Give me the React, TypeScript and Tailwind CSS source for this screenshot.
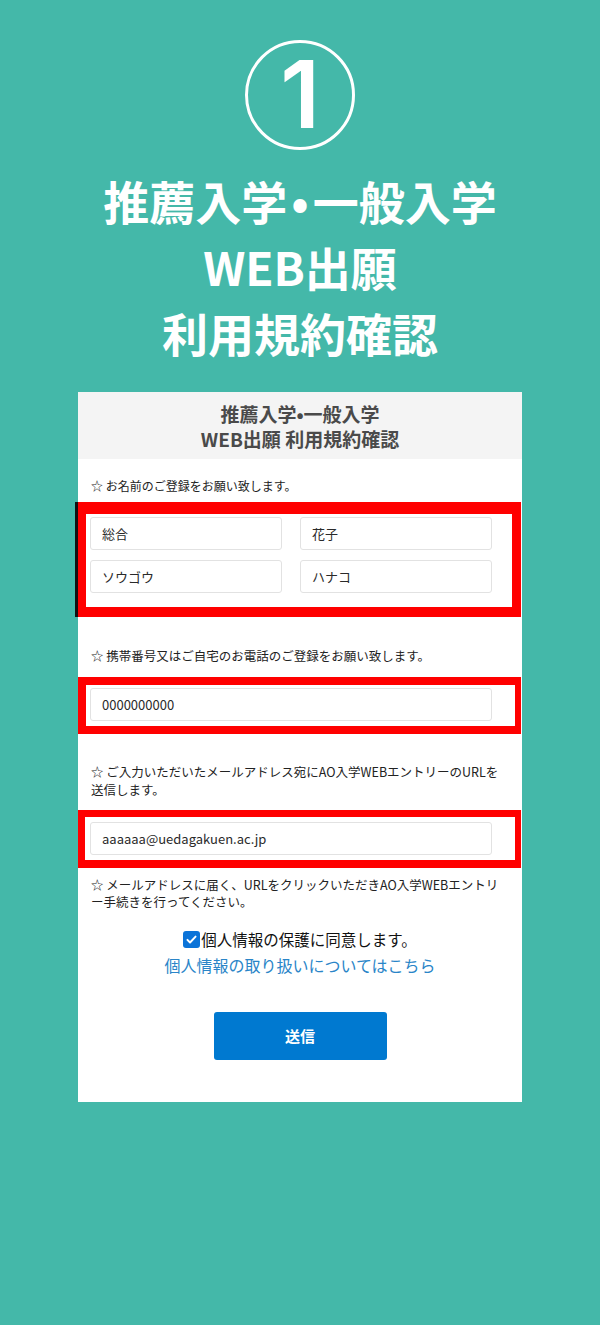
import React from "react";

const jp = { fontFamily: '"Noto Sans CJK JP", "Noto Sans", sans-serif' };

function Field({ value }: { value: string }) {
  return (
    <div className="h-[33px] rounded-[3px] border border-[#e2e2e2] bg-white pl-[11px] flex items-center text-[13px] text-[#2a2a2a]">
      {value}
    </div>
  );
}

export default function App() {
  return (
    <div className="min-h-[1325px] w-full bg-[#44b8a9] flex flex-col items-center pt-[40px]" style={jp}>
      <div className="w-[110px] h-[110px] rounded-full border-[3px] border-white flex items-center justify-center">
        <span className="text-white text-[94px] font-semibold leading-none -mt-[2px] font-['Inter',sans-serif]">1</span>
      </div>
      <div className="mt-[17px] text-white font-bold text-[46px] leading-[66px] text-center">
        <div>
          推薦入学<span className="mx-[4px]">•</span>一般入学
        </div>
        <div>WEB出願</div>
        <div>利用規約確認</div>
      </div>

      <div className="mt-[27px] w-[444px] bg-white pb-[42px]">
        <div className="h-[67px] bg-[#f4f4f4] flex flex-col items-center justify-center text-[19px] font-bold text-[#4a4a4a] leading-[25px]">
          <div>推薦入学•一般入学</div>
          <div>WEB出願 利用規約確認</div>
        </div>

        <p className="mt-[18px] px-[13px] text-[12px] leading-[18px] text-[#222]">☆ お名前のご登録をお願い致します。</p>
        <div className="mt-[7px] mr-[1px] border-[#ff0000] border-t-[12px] border-b-[10px] border-l-[8px] border-r-[9px] pt-[3px] pb-[14px] pl-[4px] pr-[20px] shadow-[-3px_0_0_#111]">
          <div className="grid grid-cols-2 gap-x-[18px] gap-y-[10px]">
            <Field value="総合" />
            <Field value="花子" />
            <Field value="ソウゴウ" />
            <Field value="ハナコ" />
          </div>
        </div>

        <p className="mt-[30px] px-[13px] text-[12.5px] leading-[18px] text-[#222]">☆ 携帯番号又はご自宅のお電話のご登録をお願い致します。</p>
        <div className="mt-[12px] mr-[1px] border-[#ff0000] border-[8px] border-r-[6px] pt-[3px] pb-[5px] pl-[4px] pr-[23px]">
          <Field value="0000000000" />
        </div>

        <p className="mt-[29px] pl-[13px] pr-[8px] text-[12.5px] leading-[18px] text-[#222]">
          ☆ ご入力いただいたメールアドレス宛にAO入学WEBエントリーのURLを
          <br />
          送信します。
        </p>
        <div className="mt-[11px] mr-[1px] border-[#ff0000] border-[7px] border-r-[6px] border-b-[8px] pt-[5px] pb-[5px] pl-[5px] pr-[23px]">
          <Field value="aaaaaa@uedagakuen.ac.jp" />
        </div>

        <p className="mt-[8px] pl-[13px] pr-[8px] text-[12.5px] leading-[17px] text-[#222]">
          ☆ メールアドレスに届く、URLをクリックいただきAO入学WEBエントリ
          <br />
          ー手続きを行ってください。
        </p>

        <div className="mt-[18px] flex items-center justify-center">
          <span className="w-[17px] h-[17px] rounded-[3px] bg-[#0b73d8] flex items-center justify-center">
            <svg width="13" height="13" viewBox="0 0 16 16" fill="none">
              <path d="M3 8.5l3.2 3.2L13 4.5" stroke="white" strokeWidth="2.4" strokeLinecap="round" strokeLinejoin="round" />
            </svg>
          </span>
          <span className="text-[15.5px] leading-[22px] text-[#111] ml-[1px]">個人情報の保護に同意します。</span>
        </div>
        <div className="mt-[4px] text-center text-[16px] leading-[22px] text-[#2a85c8]">個人情報の取り扱いについてはこちら</div>

        <div className="mt-[36px] flex justify-center">
          <button className="w-[173px] h-[48px] rounded-[3px] bg-[#0079d0] text-white text-[15px] font-bold">送信</button>
        </div>
      </div>
    </div>
  );
}
